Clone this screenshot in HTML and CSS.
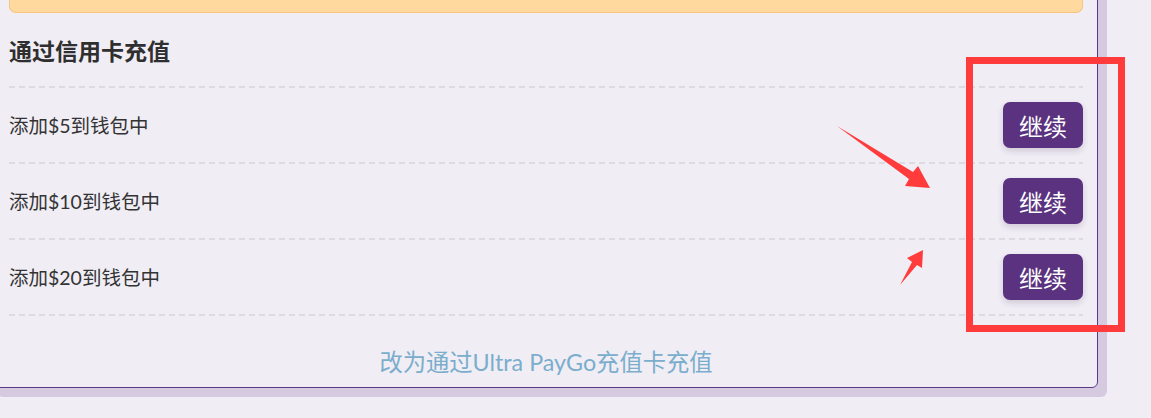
FILE: index.html
```html
<!DOCTYPE html>
<html lang="zh-CN">
<head>
<meta charset="utf-8">
<title>通过信用卡充值</title>
<link rel="stylesheet" href="styles.css">
</head>
<body>
<div class="page">
  <div class="card">
    <div class="alert"></div>
    <h2 class="heading">通过信用卡充值</h2>
    <ul class="options">
      <li class="option"><span class="option-label">添加$5到钱包中</span><button class="btn">继续</button></li>
      <li class="option"><span class="option-label">添加$10到钱包中</span><button class="btn">继续</button></li>
      <li class="option"><span class="option-label">添加$20到钱包中</span><button class="btn">继续</button></li>
    </ul>
    <div class="footer"><a class="switch-link" href="#">改为通过Ultra PayGo充值卡充值</a></div>
  </div>
  <div class="annot-box"></div>
  <svg class="annot-arrows" width="1151" height="418" viewBox="0 0 1151 418">
    <polygon points="837,126 913,172 918,166 930,188 905,186 909,179" fill="#ff3b3b"/>
    <polygon points="900,285 912,262 907,258 923,250 922,268 917,265" fill="#ff3b3b"/>
  </svg>
</div>
</body>
</html>
```

FILE: styles.css
```css
* { box-sizing: border-box; }
html, body {
  margin: 0;
  padding: 0;
  background: #f0edf5;
  overflow: hidden;
}
body {
  font-family: Lato, "Noto Sans CJK SC", sans-serif;
  color: #333;
}
.page {
  position: relative;
  display: flow-root;
  width: 1151px;
  height: 418px;
  overflow: hidden;
}
.card {
  margin: -40px 0 0 -12px;
  width: 1110px;
  border: 1px solid #5b3a8c;
  border-radius: 6px;
  box-shadow: 9px 9px 0 #d6cae1;
  padding: 0 14px 0 20px;
  background: #f0edf5;
}
.alert {
  height: 52px;
  background: #ffd99e;
  border: 1px solid #f6c57c;
  border-radius: 0 0 7px 7px;
  border-top: none;
}
.heading {
  margin: 23px 0 20px;
  font-size: 23px;
  line-height: 30px;
  font-weight: 700;
  color: #2f2f2f;
}
.options {
  list-style: none;
  margin: 0;
  padding: 0;
}
.option {
  display: flex;
  align-items: center;
  justify-content: space-between;
  height: 76px;
  padding: 2px 0 0;
  background-image: repeating-linear-gradient(90deg, #dddae0 0 6px, transparent 6px 10px);
  background-size: 100% 2px;
  background-repeat: no-repeat;
  background-position: 0 0;
}
.option:last-child {
  height: 78px;
  background-image:
    repeating-linear-gradient(90deg, #dddae0 0 6px, transparent 6px 10px),
    repeating-linear-gradient(90deg, #dddae0 0 6px, transparent 6px 10px);
  background-size: 100% 2px, 100% 2px;
  background-position: 0 0, 0 100%;
  padding-bottom: 2px;
}
.option-label {
  font-size: 19.5px;
  line-height: 26px;
  color: #333;
  padding-top: 2px;
}
.btn {
  width: 80px;
  height: 46px;
  border: none;
  border-radius: 7px;
  background: #5a3280;
  color: #fff;
  font-family: Lato, "Noto Sans CJK SC", sans-serif;
  font-size: 24px;
  padding: 0;
  box-shadow: 0 3px 6px rgba(60, 40, 80, 0.18);
}
.footer {
  padding: 31px 0 10px;
  text-align: center;
}
.switch-link {
  font-size: 23.3px;
  line-height: 30px;
  color: #7badcc;
  text-decoration: none;
}
.annot-box {
  position: absolute;
  left: 966px;
  top: 57px;
  width: 159px;
  height: 275px;
  border: 7px solid #ff3b3b;
}
.annot-arrows {
  position: absolute;
  left: 0;
  top: 0;
  pointer-events: none;
}
```
